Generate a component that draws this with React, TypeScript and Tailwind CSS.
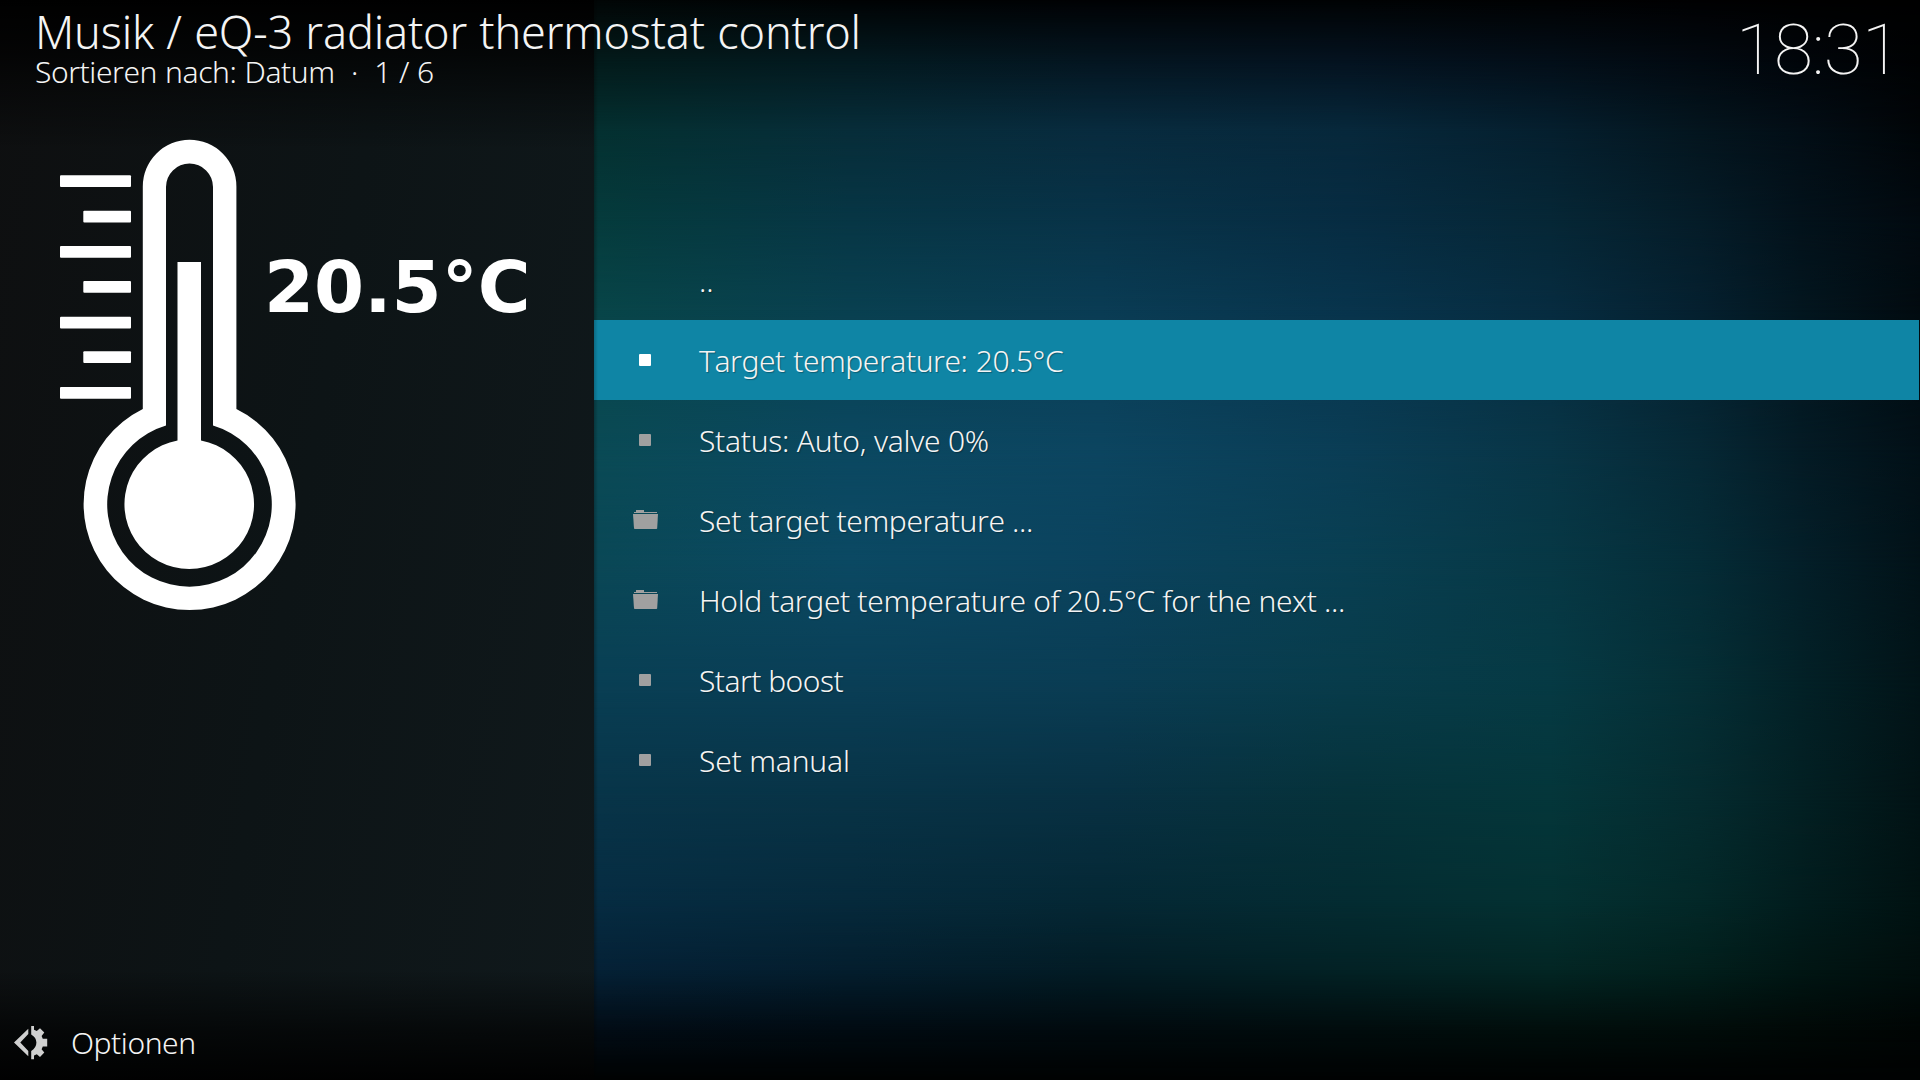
const rows = [
  { icon: "none", label: "..", tracking: "tracking-normal" },
  { icon: "dot", label: "Target temperature: 20.5°C", focused: true, tracking: "tracking-[-0.46px] [word-spacing:1px]" },
  { icon: "dot", label: "Status: Auto, valve 0%", tracking: "tracking-[-0.3px] [word-spacing:0.3px]" },
  { icon: "folder", label: "Set target temperature ...", tracking: "tracking-[-0.38px]" },
  { icon: "folder", label: "Hold target temperature of 20.5°C for the next ...", tracking: "tracking-[-0.37px]" },
  { icon: "dot", label: "Start boost", tracking: "tracking-[-0.55px]" },
  { icon: "dot", label: "Set manual", tracking: "tracking-[-0.2px]" },
];

// Each band fades in from the band above it, so the stack blends into one smooth backdrop.
const backdropBands = [
  "bg-[linear-gradient(to_right,#020606_594px,#010304_850px,#010204_1100px,#010304_1350px,#000203_1550px,#000102_1700px,#000101_1800px,#000_1920px)]",
  "bg-[linear-gradient(to_right,#031a1a_594px,#03191f_850px,#041520_1100px,#04121f_1350px,#030e18_1550px,#020910_1700px,#01050a_1800px,#000203_1920px)] [mask-image:linear-gradient(transparent_0px,#000_60px)]",
  "bg-[linear-gradient(to_right,#043030_594px,#072d39_850px,#082b3e_1100px,#07283b_1350px,#051f2e_1550px,#04151e_1700px,#030e16_1800px,#010508_1920px)] [mask-image:linear-gradient(transparent_60px,#000_130px)]",
  "bg-[linear-gradient(to_right,#053b3c_594px,#073645_850px,#083348_1100px,#072c42_1350px,#062736_1550px,#051c28_1700px,#03121b_1800px,#020a10_1920px)] [mask-image:linear-gradient(transparent_130px,#000_220px)]",
  "bg-[linear-gradient(to_right,#084548_594px,#094050_850px,#0a3c54_1100px,#08344c_1350px,#072c40_1550px,#05202f_1700px,#03161f_1800px,#020b10_1920px)] [mask-image:linear-gradient(transparent_220px,#000_310px)]",
  "bg-[linear-gradient(to_right,#0a4a55_594px,#0b4861_850px,#0c4560_1100px,#0a3d55_1350px,#083546_1550px,#062835_1700px,#041b25_1800px,#021017_1920px)] [mask-image:linear-gradient(transparent_310px,#000_450px)]",
  "bg-[linear-gradient(to_right,#0a4856_594px,#0b4963_850px,#0b435e_1100px,#093f52_1350px,#073845_1550px,#052c37_1700px,#041f29_1800px,#021218_1920px)] [mask-image:linear-gradient(transparent_450px,#000_560px)]",
  "bg-[linear-gradient(to_right,#093f54_594px,#0a3f57_850px,#0a3d54_1100px,#083c4b_1350px,#063a44_1550px,#052e35_1700px,#032127_1800px,#021418_1920px)] [mask-image:linear-gradient(transparent_560px,#000_680px)]",
  "bg-[linear-gradient(to_right,#083448_594px,#083346_850px,#083042_1100px,#06323a_1350px,#04363a_1550px,#052b2f_1700px,#032023_1800px,#021315_1920px)] [mask-image:linear-gradient(transparent_680px,#000_800px)]",
  "bg-[linear-gradient(to_right,#062c42_594px,#062a3c_850px,#052835_1100px,#042c32_1350px,#043132_1550px,#032828_1700px,#021d1e_1800px,#011212_1920px)] [mask-image:linear-gradient(transparent_800px,#000_900px)]",
  "bg-[linear-gradient(to_right,#052136_594px,#041e2e_850px,#031c25_1100px,#032225_1350px,#032624_1550px,#021f1c_1700px,#011614_1800px,#010e0d_1920px)] [mask-image:linear-gradient(transparent_900px,#000_970px)]",
  "bg-[linear-gradient(to_right,#020c15_594px,#010b12_850px,#010a0e_1100px,#010c0d_1350px,#010e0c_1550px,#010c0a_1700px,#010907_1800px,#000504_1920px)] [mask-image:linear-gradient(transparent_970px,#000_1030px)]",
  "bg-[#000202] [mask-image:linear-gradient(transparent_1030px,#000_1080px)]",
];

function FolderIcon() {
  return (
    <svg className="h-5 w-[26px]" viewBox="0 0 26 20" fill="#a0a0a0">
      <path d="M1 2H3V0H11V2H24V3H1Z" />
      <path d="M0 4H25L24.2 18.3Q24.1 19 23.4 19H1.8Q1.1 19 1 18.3Z" />
    </svg>
  );
}

function OptionsIcon() {
  return (
    <svg className="mt-[5px] h-[34px] w-[34px]" viewBox="0 0 34 34" fill="#d0d0d0">
      <path d="M14.3 2.8V8L6.3 16.5L14.3 25V30.2L0 16.5Z" />
      <path d="M17.2 0H20V3.8L22.8 5L26 2.3L30.3 6.6L27.6 9.9L28.8 12.8H33.2V20.4H28.8L27.6 23.3L30.3 26.6L26 30.9L22.8 28.2L20 29.4V33.2H17.2V25Q22.4 21.8 22.4 16.6Q22.4 11.4 17.2 8.4Z" />
    </svg>
  );
}

function Thermometer() {
  return (
    <svg className="h-[480px] w-[240px] shrink-0" viewBox="60 135 240 480" fill="#fff">
      {[175.3, 246, 316.7, 387].map((y) => (
        <rect key={y} x="60" y={y} width="71" height="11.8" rx="1" />
      ))}
      {[210.7, 281, 351.3].map((y) => (
        <rect key={y} x="83.3" y={y} width="47.7" height="11.8" rx="1" />
      ))}
      <path
        fillRule="evenodd"
        d="M142.8 409V186.5A46.8 46.8 0 0 1 236.4 186.5V409A106 106 0 1 1 142.8 409ZM166 425.5V187A23.5 23.5 0 0 1 213 187V425.5A82.3 82.3 0 1 1 166 425.5Z"
      />
      <path d="M177.5 262H201V440.5A64.8 64.8 0 1 1 177.5 440.5Z" />
    </svg>
  );
}

export default function App() {
  return (
    <div className="relative flex h-[1080px] w-[1920px] flex-col overflow-hidden bg-black font-['Noto_Sans',sans-serif] font-light text-[#f4f4f4] [font-kerning:none]">
      {backdropBands.map((band) => (
        <div key={band} className={`absolute inset-0 ${band}`} />
      ))}
      <div className="absolute inset-y-0 left-0 w-[594px] bg-[linear-gradient(100deg,#0e0f10,#0d1416_50%,#10191c)]">
        <div className="absolute inset-x-0 top-0 h-[150px] bg-[linear-gradient(to_bottom,#000,rgba(0,0,0,0.72)_35%,rgba(0,0,0,0.3)_70%,transparent)]" />
        <div className="absolute inset-x-0 bottom-0 h-[110px] bg-[linear-gradient(to_top,rgba(0,0,0,0.95),rgba(0,0,0,0.62)_45%,transparent)]" />
      </div>
      <div className="absolute inset-y-0 left-[594px] w-1 bg-linear-to-r from-black/25 to-transparent" />

      <header className="relative flex h-[135px] justify-between pr-[20px] pl-[35px]">
        <div>
          <h1 className="mt-px text-[45px] leading-[61px] tracking-[-0.17px] [word-spacing:0.8px] whitespace-nowrap">Musik / eQ-3 radiator thermostat control</h1>
          <p className="-mt-[11px] text-[30px] leading-[41px] tracking-[-0.44px] [word-spacing:0.8px] whitespace-pre">Sortieren nach: Datum  ·  1 / 6</p>
        </div>
        <time className="mt-[8px] font-[Roboto] text-[71px] leading-[84px] font-thin tracking-[-0.8px]">18:31</time>
      </header>

      <main className="relative flex h-[865px]">
        <aside className="flex w-[594px] shrink-0 pl-[60px]">
          <Thermometer />
          <p className="-ml-[36px] mt-[110px] font-['DejaVu_Sans'] text-[72px] leading-[84px] font-bold text-white">20.5°C</p>
        </aside>
        <ul className="mt-[105px] w-[1325px]">
          {rows.map((row) => (
            <li
              key={row.label}
              className={
                row.focused ? "flex h-20 items-center bg-[#0f85a5] bg-[linear-gradient(to_right,rgba(0,0,0,0.2),transparent_4px)]" : "flex h-20 items-center"
              }
            >
              <span className="flex w-[105px] items-center pl-[39px]">
                {row.icon === "dot" && (
                  <span className={row.focused ? "ml-[6px] size-3 rounded-[1px] bg-white" : "ml-[6px] size-3 rounded-[1px] bg-[#a0a0a0]"} />
                )}
                {row.icon === "folder" && <FolderIcon />}
              </span>
              <span className={`text-[30px] leading-[41px] [text-shadow:1px_1px_1px_rgba(0,0,0,0.3)] ${row.tracking}`}>{row.label}</span>
            </li>
          ))}
        </ul>
      </main>

      <footer className="relative flex h-20 items-center gap-[23px] pl-[14px]">
        <OptionsIcon />
        <span className="mt-[5px] text-[30px] leading-[41px] tracking-[-0.45px]">Optionen</span>
      </footer>
    </div>
  );
}
